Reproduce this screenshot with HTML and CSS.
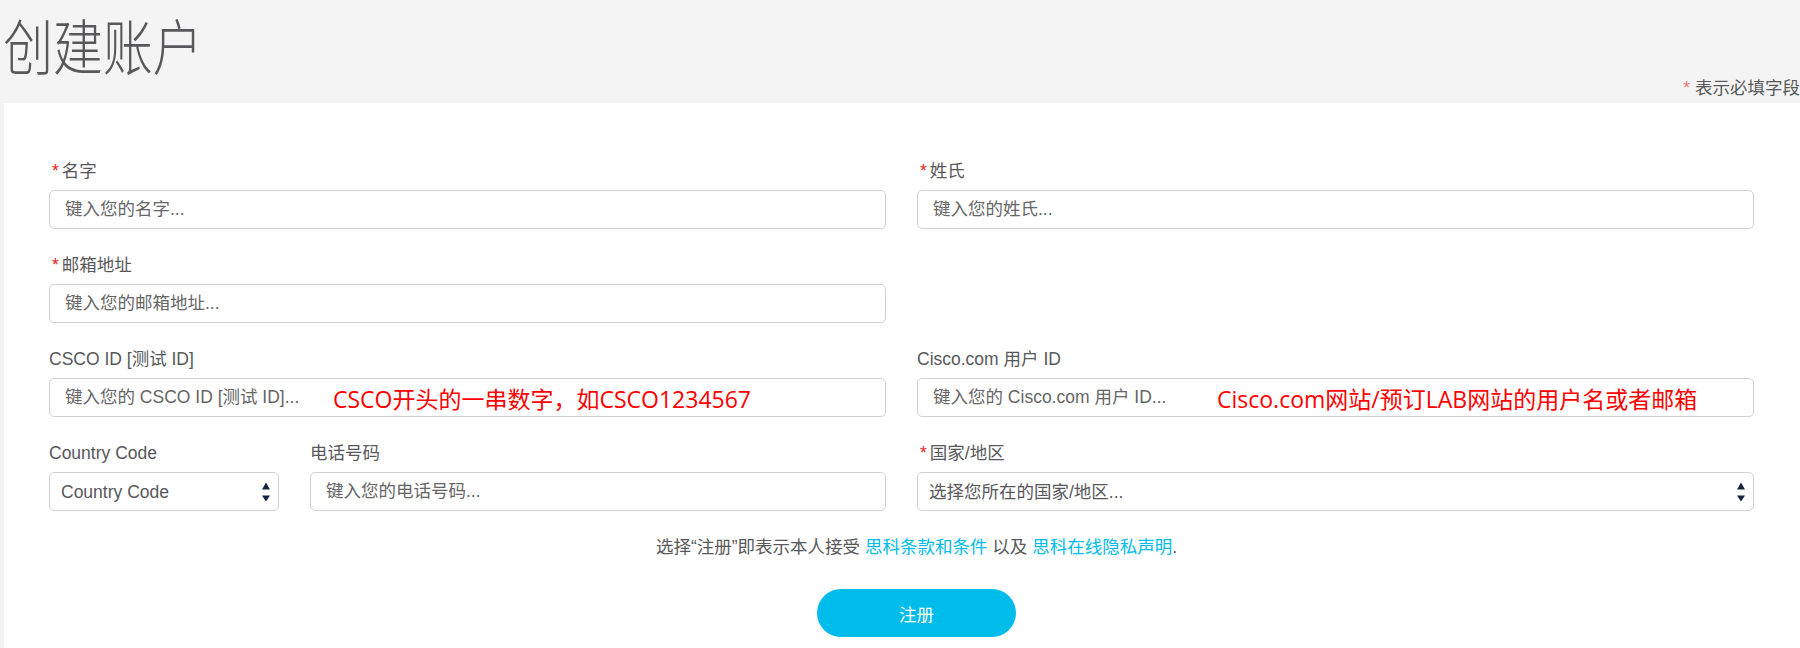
FILE: index.html
```html
<!DOCTYPE html>
<html lang="zh-CN">
<head>
    <meta charset="UTF-8">
    <title>创建账户</title>
    <link rel="stylesheet" href="styles.css">
</head>
<body>
    <div class="page-header">
        <h1 class="page-title">创建账户</h1>
        <p class="required-note"><span class="note-star">*</span> 表示必填字段</p>
    </div>

    <div class="panel">
        <form class="signup-form" onsubmit="return false">
            <div class="form-row">
                <div class="field">
                    <label><span class="star">*</span>名字</label>
                    <input type="text" placeholder="键入您的名字...">
                </div>
                <div class="field">
                    <label><span class="star">*</span>姓氏</label>
                    <input type="text" placeholder="键入您的姓氏...">
                </div>
            </div>

            <div class="form-row">
                <div class="field">
                    <label><span class="star">*</span>邮箱地址</label>
                    <input type="text" placeholder="键入您的邮箱地址...">
                </div>
                <div class="field"></div>
            </div>

            <div class="form-row">
                <div class="field">
                    <label>CSCO ID [测试 ID]</label>
                    <div class="input-wrap">
                        <input type="text" placeholder="键入您的 CSCO ID [测试 ID]...">
                        <span class="hint hint-csco">CSCO开头的一串数字，如CSCO1234567</span>
                    </div>
                </div>
                <div class="field">
                    <label>Cisco.com 用户 ID</label>
                    <div class="input-wrap">
                        <input type="text" placeholder="键入您的 Cisco.com 用户 ID...">
                        <span class="hint hint-cisco">Cisco.com网站/预订LAB网站的用户名或者邮箱</span>
                    </div>
                </div>
            </div>

            <div class="form-row">
                <div class="field-pair">
                    <div class="field">
                        <label>Country Code</label>
                        <div class="select-wrap">
                            <select>
                                <option>Country Code</option>
                            </select>
                            <svg class="select-arrows" width="8" height="19" viewBox="0 0 8 19">
                                <polygon points="0,7 4,0 8,7" />
                                <polygon points="0,13 8,13 4,19" />
                            </svg>
                        </div>
                    </div>
                    <div class="field">
                        <label>电话号码</label>
                        <input type="text" placeholder="键入您的电话号码...">
                    </div>
                </div>
                <div class="field">
                    <label><span class="star">*</span>国家/地区</label>
                    <div class="select-wrap">
                        <select>
                            <option>选择您所在的国家/地区...</option>
                        </select>
                        <svg class="select-arrows" width="8" height="19" viewBox="0 0 8 19">
                            <polygon points="0,7 4,0 8,7" />
                            <polygon points="0,13 8,13 4,19" />
                        </svg>
                    </div>
                </div>
            </div>

            <p class="terms">选择“注册”即表示本人接受 <a href="#">思科条款和条件</a> 以及 <a href="#">思科在线隐私声明</a>.</p>

            <div class="actions">
                <button type="submit" class="register-btn">注册</button>
            </div>
        </form>
    </div>
</body>
</html>
```

FILE: styles.css
```css
body {
    margin: 0;
    background-color: #f4f4f4;
    font-family: "Liberation Sans", "Noto Sans CJK SC", sans-serif;
    font-size: 17.5px;
    color: #58585b;
    overflow: hidden;
}

.page-header {
    height: 103px;
    box-sizing: border-box;
    padding-bottom: 5px;
    display: flex;
    justify-content: space-between;
    align-items: flex-end;
}

.page-title {
    align-self: flex-start;
    margin: 0;
    padding-left: 4px;
    font-family: "Noto Sans CJK SC", sans-serif;
    font-size: 60px;
    font-weight: 300;
    line-height: normal;
    color: #58585b;
    transform: scaleX(0.83);
    transform-origin: left center;
}

.required-note {
    margin: 0;
    line-height: 20px;
    white-space: nowrap;
}

.note-star {
    color: #ef7b7b;
}

.panel {
    margin-left: 4px;
    height: calc(100vh - 103px);
    box-sizing: border-box;
    background-color: #fff;
    padding: 58px 46px 0 45px;
}

.form-row {
    display: grid;
    grid-template-columns: 1fr 1fr;
    column-gap: 31px;
    margin-bottom: 26px;
}

.field-pair {
    display: grid;
    grid-template-columns: 230px 1fr;
    column-gap: 31px;
}

.field label {
    display: block;
    line-height: 20px;
    margin-bottom: 9px;
    white-space: nowrap;
}

.star {
    color: #e2231a;
    margin-left: 3px;
    margin-right: 3px;
}

input[type="text"],
select {
    display: block;
    width: 100%;
    height: 39px;
    box-sizing: border-box;
    border: 1px solid #d2d2d2;
    border-radius: 5px;
    background-color: #fff;
    font-family: inherit;
    font-size: 17.5px;
    color: #58585b;
    outline: none;
}

input[type="text"] {
    padding: 0 15px;
}

input::placeholder {
    color: #666;
}

select {
    appearance: none;
    -webkit-appearance: none;
    padding: 0 30px 0 11px;
}

.select-wrap,
.input-wrap {
    position: relative;
}

.select-arrows {
    position: absolute;
    right: 9px;
    top: 50%;
    transform: translateY(-50%);
    fill: #14253f;
    pointer-events: none;
}

.hint {
    position: absolute;
    top: 50%;
    transform: translateY(-50%);
    font-family: "Open Sans", "Noto Sans CJK SC", sans-serif;
    font-size: 23px;
    color: #ff0000;
    white-space: nowrap;
    pointer-events: none;
}

.hint-csco {
    left: 284px;
}

.hint-cisco {
    left: 300px;
}

.terms {
    margin: 3px 0 0;
    padding-left: 30px;
    line-height: 20px;
    text-align: center;
}

.terms a {
    color: #00bceb;
    text-decoration: none;
}

.actions {
    margin-top: 32px;
    padding-left: 30px;
    text-align: center;
}

.register-btn {
    width: 199px;
    height: 48px;
    border: none;
    border-radius: 24px;
    background-color: #00bceb;
    color: #fff;
    font-family: inherit;
    font-size: 17.5px;
    cursor: pointer;
}
```
